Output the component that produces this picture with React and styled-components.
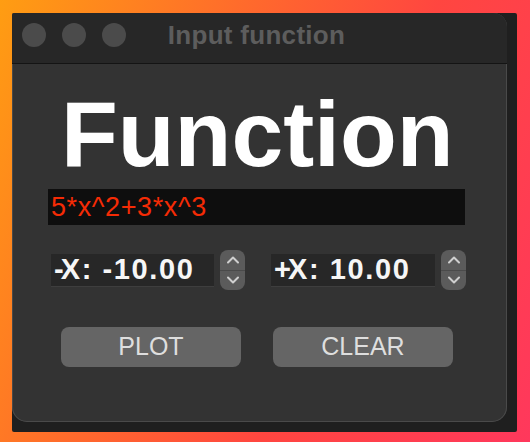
import styled, { createGlobalStyle } from 'styled-components'

const GlobalStyle = createGlobalStyle`
	html, body {
		margin: 0;
		padding: 0;
		background: #ffffff;
	}
	body {
		font-family: "Liberation Sans", Arial, sans-serif;
	}
`

const Backdrop = styled.div`
	width: 530px;
	height: 442px;
	box-sizing: border-box;
	padding: 13px 13px 10px 12px;
	background: linear-gradient(112deg, #ff9d12 0%, #ff6a2c 35%, #ff4640 62%, #ff385c 100%);
`

const Frame = styled.div`
	background: #1f1f1f;
	padding: 0 10px 10px 0;
	border-radius: 2px;
`

const Window = styled.div`
	height: 409px;
	display: flex;
	flex-direction: column;
	background: #333333;
	border-radius: 3px 14px 15px 15px;
	box-shadow: inset 0 0 0 1px #4a4a4a;
	overflow: hidden;
`

const TitleBar = styled.div`
	position: relative;
	height: 50px;
	flex: 0 0 auto;
	display: flex;
	align-items: center;
	justify-content: center;
	background: #272727;
	border-bottom: 1px solid #141414;
`

const Lights = styled.div`
	position: absolute;
	left: 10px;
	top: 10px;
	display: flex;
	gap: 16px;
`

const Light = styled.span`
	width: 24px;
	height: 24px;
	border-radius: 50%;
	background: #4b4b4b;
`

const Title = styled.div`
	font-size: 26px;
	font-weight: 700;
	color: #5d5d5d;
	margin-left: -6px;
	margin-top: -6px;
	letter-spacing: 0.3px;
`

const Content = styled.div`
	flex: 1 1 auto;
	display: flex;
	flex-direction: column;
	padding: 0 42px 0 36px;
`

const Heading = styled.h1`
	margin: 22px 0 0 13px;
	font-size: 93px;
	line-height: 96px;
	font-weight: 700;
	color: #ffffff;
`

const Formula = styled.div`
	margin-top: 7px;
	height: 36px;
	display: flex;
	align-items: center;
	padding-left: 3px;
	background: #0e0e0e;
	color: #f52b05;
	font-size: 27px;
	letter-spacing: 0.6px;
`

const SpinRow = styled.div`
	display: flex;
	align-items: center;
	margin-top: 25px;
	padding-left: 3px;
	gap: 26px;
`

const Spin = styled.div`
	display: flex;
	align-items: center;
	gap: 6px;
`

const SpinField = styled.div`
	width: ${p => p.$w}px;
	height: 33px;
	box-sizing: border-box;
	display: flex;
	align-items: center;
	padding-left: 3px;
	background: #272727;
	border-bottom: 1px solid #3e3e3e;
	color: #f6f6f6;
	font-size: 29px;
	font-weight: 700;
	letter-spacing: 1.6px;
	white-space: pre;

	b {
		letter-spacing: -3px;
	}
`

const Stepper = styled.div`
	width: 25px;
	height: 40px;
	display: flex;
	flex-direction: column;
	border-radius: 8px;
	background: #5b5b5b;
	overflow: hidden;
`

const StepHalf = styled.div`
	flex: 1 1 0;
	display: flex;
	align-items: center;
	justify-content: center;
	border-top: ${p => (p.$lower ? '1px solid #4a4a4a' : 'none')};
`

const ButtonRow = styled.div`
	display: flex;
	margin-top: 37px;
	padding-left: 13px;
	gap: 32px;
`

const Button = styled.button`
	width: 180px;
	height: 40px;
	border: none;
	border-radius: 8px;
	background: #656565;
	color: #dedede;
	font-family: "Liberation Sans", Arial, sans-serif;
	font-size: 25px;
	padding: 0 0 1px;
`

const Chevron = ({ up }) => (
	<svg width="14" height="9" viewBox="0 0 14 9">
		<path
			d={up ? 'M2 7.5 L7 2.5 L12 7.5' : 'M2 1.5 L7 6.5 L12 1.5'}
			fill="none"
			stroke="#cfcfcf"
			strokeWidth="2"
			strokeLinecap="round"
			strokeLinejoin="round"
		/>
	</svg>
)

const SpinBox = ({ label, value, width }) => (
	<Spin>
		<SpinField $w={width}>
			<b>{label[0]}</b>{label.slice(1)}: {value}
		</SpinField>
		<Stepper>
			<StepHalf><Chevron up /></StepHalf>
			<StepHalf $lower><Chevron /></StepHalf>
		</Stepper>
	</Spin>
)

export default function App() {
	return (
		<>
			<GlobalStyle />
			<Backdrop>
				<Frame>
					<Window>
						<TitleBar>
							<Lights>
								<Light />
								<Light />
								<Light />
							</Lights>
							<Title>Input function</Title>
						</TitleBar>
						<Content>
							<Heading>Function</Heading>
							<Formula>5*x^2+3*x^3</Formula>
							<SpinRow>
								<SpinBox label="-X" value="-10.00" width={163} />
								<SpinBox label="+X" value="10.00" width={164} />
							</SpinRow>
							<ButtonRow>
								<Button>PLOT</Button>
								<Button>CLEAR</Button>
							</ButtonRow>
						</Content>
					</Window>
				</Frame>
			</Backdrop>
		</>
	)
}
